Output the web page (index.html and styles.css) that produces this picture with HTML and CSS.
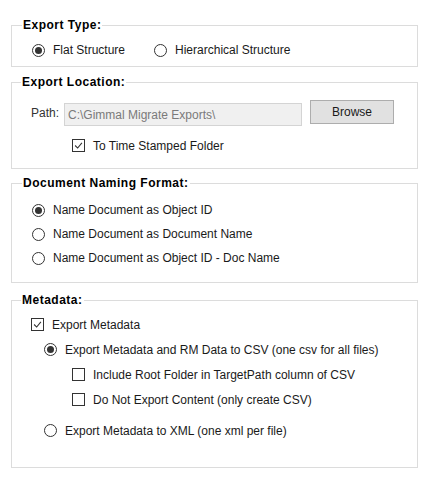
FILE: index.html
```html
<!DOCTYPE html>
<html lang="en">

<head>
  <meta charset="UTF-8">
  <title>Export Settings</title>
  <link rel="stylesheet" href="styles.css">
</head>

<body>
  <div class="panel">
    <fieldset class="group group-type">
      <legend>Export Type:</legend>
      <div class="row inline">
        <label class="opt"><span class="radio checked"></span>Flat Structure</label>
        <label class="opt"><span class="radio"></span>Hierarchical Structure</label>
      </div>
    </fieldset>

    <fieldset class="group group-location">
      <legend>Export Location:</legend>
      <div class="path-row">
        <span class="path-label">Path:</span>
        <input class="path-input" type="text" value="C:\Gimmal Migrate Exports\" disabled>
        <button class="btn" type="button">Browse</button>
      </div>
      <div class="row indent2">
        <label class="opt"><span class="check checked"><svg viewBox="0 0 13 13"><polyline points="2.5,6.5 5.5,9.5 10.5,3.5" /></svg></span>To Time Stamped Folder</label>
      </div>
    </fieldset>

    <fieldset class="group group-naming">
      <legend>Document Naming Format:</legend>
      <div class="row"><label class="opt"><span class="radio checked"></span>Name Document as Object ID</label></div>
      <div class="row"><label class="opt"><span class="radio"></span>Name Document as Document Name</label></div>
      <div class="row"><label class="opt"><span class="radio"></span>Name Document as Object ID - Doc Name</label></div>
    </fieldset>

    <fieldset class="group group-meta">
      <legend>Metadata:</legend>
      <div class="row"><label class="opt"><span class="check checked"><svg viewBox="0 0 13 13"><polyline points="2.5,6.5 5.5,9.5 10.5,3.5" /></svg></span>Export Metadata</label></div>
      <div class="row indent1"><label class="opt"><span class="radio checked"></span>Export Metadata and RM Data to CSV (one csv for all files)</label></div>
      <div class="row indent2"><label class="opt"><span class="check"></span>Include Root Folder in TargetPath column of CSV</label></div>
      <div class="row indent2"><label class="opt"><span class="check"></span>Do Not Export Content (only create CSV)</label></div>
      <div class="row indent1 gap-top"><label class="opt"><span class="radio"></span>Export Metadata to XML (one xml per file)</label></div>
    </fieldset>
  </div>
</body>

</html>
```

FILE: styles.css
```css
* {
  margin: 0;
  padding: 0;
  box-sizing: border-box;
}

body {
  font-family: "Liberation Sans", Arial, sans-serif;
  font-size: 12px;
  color: #1a1a1a;
  background: #fff;
}

.panel {
  padding: 17px 19px 0 11px;
  display: flex;
  flex-direction: column;
}

.group {
  border: 1px solid #dcdcdc;
  padding: 0 10px 0 20px;
  min-width: 0;
}

.group legend {
  font-weight: bold;
  letter-spacing: 0.5px;
  line-height: 16px;
  padding: 0 1px;
  margin-left: -10px;
  color: #000;
}

.group-type {
  height: 50px;
  padding-top: 7px;
}

.group-location {
  margin-top: 7px;
  height: 95px;
  padding-left: 19px;
}

.group-naming {
  margin-top: 6px;
  height: 108px;
  padding-top: 7px;
}

.group-naming .row {
  height: 24px;
}

.group-meta {
  margin-top: 9px;
  height: 176px;
  padding-left: 19px;
  padding-top: 4px;
}

.row {
  height: 25px;
  display: flex;
  align-items: center;
}

.row.inline {
  height: 20px;
  gap: 29px;
}

.indent1 {
  padding-left: 13px;
}

.indent2 {
  padding-left: 41px;
}

.gap-top {
  margin-top: 6px;
}

.opt {
  display: flex;
  align-items: center;
  gap: 8px;
  white-space: nowrap;
}

.radio {
  width: 13px;
  height: 13px;
  border: 1px solid #333;
  border-radius: 50%;
  display: flex;
  align-items: center;
  justify-content: center;
  flex: none;
}

.radio.checked::after {
  content: "";
  width: 7px;
  height: 7px;
  border-radius: 50%;
  background: #333;
}

.check {
  width: 13px;
  height: 13px;
  border: 1px solid #333;
  flex: none;
  display: flex;
}

.check svg {
  width: 11px;
  height: 11px;
  fill: none;
  stroke: #333;
  stroke-width: 1.3;
}

.path-row {
  display: flex;
  align-items: center;
  height: 30px;
  margin-top: 8px;
  margin-bottom: 5px;
}

.path-label {
  color: #333;
  width: 33px;
}

.path-input {
  width: 238px;
  height: 23px;
  border: 1px solid #d4d4d4;
  background: #f0f0f0;
  color: #7a7a7a;
  font-family: inherit;
  font-size: 12px;
  padding: 0 3px;
  margin-top: 3px;
}

.btn {
  width: 84px;
  height: 24px;
  margin-left: 8px;
  border: 1px solid #adadad;
  background: #e1e1e1;
  font-family: inherit;
  font-size: 12px;
  color: #1a1a1a;
  margin-bottom: 3px;
}
```
